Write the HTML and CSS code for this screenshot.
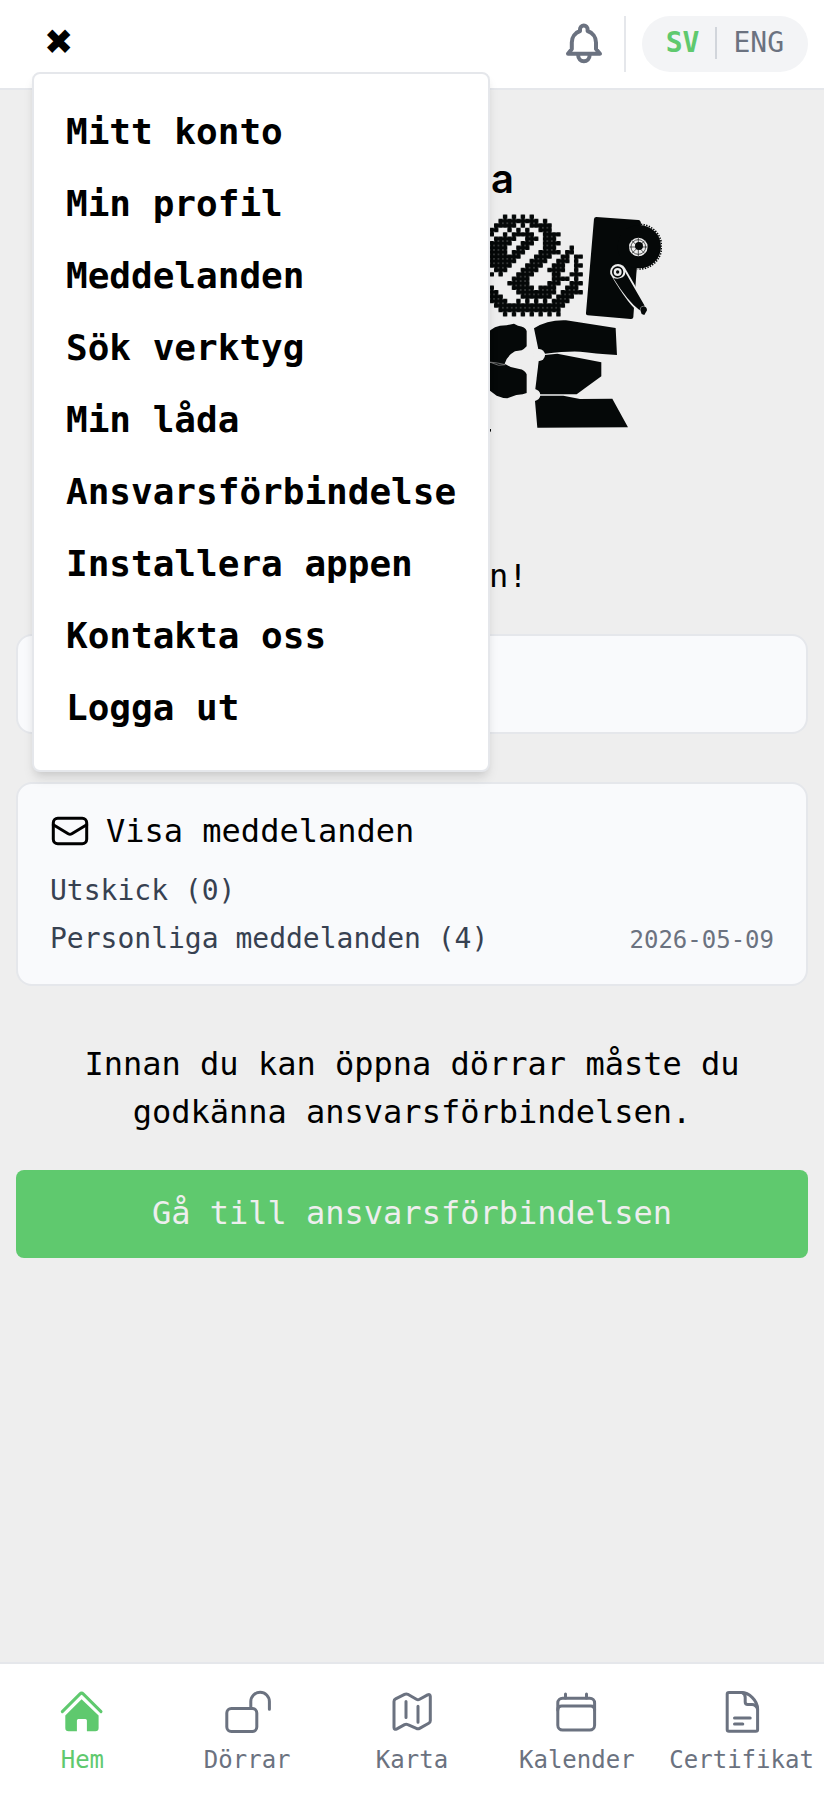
FILE: index.html
```html
<!DOCTYPE html>
<html lang="sv">
<head>
    <meta charset="UTF-8">
    <meta name="viewport" content="width=device-width, initial-scale=1.0">
    <title>Hem</title>
    <link rel="stylesheet" href="styles.css">
</head>
<body>
    <header class="header">
        <button class="menu-toggle" id="menuToggle" type="button" aria-label="Stäng menyn" aria-expanded="true">✖</button>

        <div class="header-actions">
            <button class="bell" type="button" aria-label="Notiser">
                <svg viewBox="0 0 48 48">
                    <path d="M8 33.7L11.8 29V22.5A12.2 12.2 0 0 1 20 11V9.3a3.8 3.8 0 0 1 7.6 0V11a12.2 12.2 0 0 1 8.4 11.5V29L40 33.7z"/>
                    <path d="M18.2 35.5a5.7 5.7 0 0 0 11.4 0"/>
                </svg>
            </button>
            <div class="language">
                <button class="lang active" type="button">SV</button>
                <span class="lang-divider"></span>
                <button class="lang" type="button">ENG</button>
            </div>
        </div>

        <nav class="menu" id="menu">
            <a href="#">Mitt konto</a>
            <a href="#">Min profil</a>
            <a href="#">Meddelanden</a>
            <a href="#">Sök verktyg</a>
            <a href="#">Min låda</a>
            <a href="#">Ansvarsförbindelse</a>
            <a href="#">Installera appen</a>
            <a href="#">Kontakta oss</a>
            <a href="#">Logga ut</a>
        </nav>
    </header>

    <main class="content">
        <svg class="logo" viewBox="162 160 500 280" aria-hidden="true">
            <defs>
                <pattern id="stitch" width="1" height="1" patternUnits="userSpaceOnUse">
                    <path d="M0 .5H1M.5 0V1" stroke="#050808" stroke-width=".84"/>
                </pattern>
            </defs>
            <text class="logo-text" x="514" y="193" text-anchor="end">a</text>

            <!-- O, cross-stitch -->
            <g transform="translate(485.1 214.4) scale(4.444)">
                <path fill="url(#stitch)" d="M4 0h1v1h-1zM6 0h1v1h-1zM8 0h1v1h-1zM10 0h1v1h-1z
                    M3 1h9v1h-9zM13 1h1v1h-1z
                    M2 2h4v1h-4zM6 2h1v1h-1zM8 2h1v1h-1zM10 2h5v1h-5z
                    M1 3h2v1h-2zM5 3h1v1h-1zM7 3h1v1h-1zM9 3h1v1h-1zM12 3h3v1h-3z
                    M1 4h1v1h-1zM4 4h1v1h-1zM6 4h5v1h-5zM13 4h4v1h-4z
                    M2 5h5v1h-5zM9 5h3v1h-3zM13 5h3v1h-3z
                    M1 6h5v1h-5zM8 6h3v1h-3zM13 6h4v1h-4z
                    M1 7h4v1h-4zM7 7h3v1h-3zM13 7h3v1h-3zM19 7h1v1h-1z
                    M1 8h4v1h-4zM6 8h3v1h-3zM12 8h5v1h-5zM18 8h2v1h-2z
                    M1 9h7v1h-7zM11 9h4v1h-4zM17 9h2v1h-2zM20 9h2v1h-2z
                    M1 10h6v1h-6zM10 10h4v1h-4zM16 10h3v1h-3zM20 10h1v1h-1z
                    M1 11h5v1h-5zM9 11h4v1h-4zM15 11h3v1h-3zM20 11h2v1h-2z
                    M2 12h3v1h-3zM8 12h4v1h-4zM14 12h4v1h-4zM20 12h1v1h-1z
                    M1 13h1v1h-1zM3 13h1v1h-1zM7 13h4v1h-4zM15 13h2v1h-2zM19 13h3v1h-3z
                    M6 14h4v1h-4zM15 14h4v1h-4zM20 14h1v1h-1z
                    M5 15h5v1h-5zM14 15h3v1h-3zM19 15h3v1h-3z
                    M1 16h1v1h-1zM6 16h5v1h-5zM12 16h4v1h-4zM18 16h3v1h-3z
                    M1 17h2v1h-2zM7 17h9v1h-9zM17 17h5v1h-5z
                    M1 18h3v1h-3zM8 18h7v1h-7zM16 18h4v1h-4z
                    M1 19h4v1h-4zM7 19h1v1h-1zM9 19h1v1h-1zM11 19h1v1h-1zM13 19h1v1h-1zM15 19h4v1h-4z
                    M2 20h16v1h-16z
                    M3 21h14v1h-14z
                    M4 22h1v1h-1zM6 22h1v1h-1zM8 22h1v1h-1zM10 22h1v1h-1zM12 22h1v1h-1zM14 22h1v1h-1zM16 22h1v1h-1z"/>
            </g>

            <!-- R, chainring and crank -->
            <g transform="translate(470 150) scale(.3333)">
                <path class="ink" d="M379 201l126 9q8 1 8 12l-14 150-9 130q-1 6-8 5l-129-11q-6-1-5-7l24-282q1-6 7-6z"/>
                <circle class="ink" cx="508" cy="290" r="65"/>
                <path fill="none" stroke="#050808" stroke-width="5" stroke-dasharray="4 4" d="M513 223a67 67 0 0 1-10 134"/>
                <circle class="paper" cx="505" cy="291" r="28"/>
                <g fill="none" stroke="#050808" stroke-width="2">
                    <circle cx="505" cy="291" r="22"/>
                    <path d="M505 264v54M478 291h54M486 272l38 38M524 272l-38 38"/>
                </g>
                <circle class="ink" cx="507" cy="288" r="12"/>
                <path class="paper" d="M421 372a24 24 0 0 1 44-18l66 115a15 15 0 0 1-20 20q-30-15-90-117z"/>
                <path class="ink" d="M430 384q14 5 28-2 10-8 7-17l59 102q-14 0-15 14-36-27-79-97z"/>
                <circle class="ink" cx="443" cy="366" r="17"/>
                <circle class="paper" cx="443" cy="366" r="12"/>
                <circle class="ink" cx="443" cy="366" r="5"/>
                <path class="ink" d="M511 480a10 10 0 1 1 17 6l-5 9-8-3z"/>
            </g>

            <!-- C and E, lower row -->
            <g transform="translate(470 300) scale(.3333)">
                <path class="ink" d="M40 110L62 90q12-10 28-13l20-1 22-5 12 6q22 3 26 16v46q-7 8-15 12l-20 3q-25 14-31 37l18 10 26 6q16 2 22 16v56l-12 4-19 2-27 10-12-1-20-7-20-15-20-30z"/>
                <path d="M40 184l24 4 22 8 20-2-24-5z" fill="none" stroke="#9a9a9a" stroke-width="2"/>
                <path class="ink" d="M192 85q40-26 96-24l149 23 4 81q-70-5-110-10-40-2-106 6l-20-13z"/>
                <path class="ink" d="M206 184l19-19 37-4 132 26v42l-74 54H210l-14-15z"/>
                <path class="ink" d="M195 303l15-16h70l50 10 97-1 47 86-272 1z"/>
                <circle class="paper" cx="207" cy="165" r="18"/>
                <circle class="paper" cx="194" cy="285" r="17"/>
                <path class="ink" d="M58 387h5v6l-5 6z"/>
            </g>
        </svg>

        <p class="greeting">Hej, vännen!</p>

        <section class="card card-empty"></section>

        <section class="card">
            <h2 class="card-title">
                <svg viewBox="0 0 40 40">
                    <rect x="3.3" y="7.3" width="33.4" height="25.4" rx="4.5"/>
                    <path d="M3.3 13.8l14.9 9q1.8 1 3.6 0l14.9-9"/>
                </svg>
                Visa meddelanden
            </h2>
            <div class="card-row">
                <span>Utskick (0)</span>
            </div>
            <div class="card-row">
                <span>Personliga meddelanden (4)</span>
                <time datetime="2026-05-09">2026-05-09</time>
            </div>
        </section>

        <p class="notice">Innan du kan öppna dörrar måste du godkänna ansvarsförbindelsen.</p>
        <button class="primary" type="button">Gå till ansvarsförbindelsen</button>
    </main>

    <nav class="tabbar">
        <a class="tab active" href="#">
            <svg viewBox="0 0 48 48">
                <path d="M4.3 23.6L21.8 6.1q1.8-1.8 3.6 0L43 23.6"/>
                <path class="solid" d="M7.3 27.5L23.6 11.3 40.6 27.5V40q0 3.3-3.3 3.3H28.9V32.5q0-1.5-1.5-1.5H20.4q-1.5 0-1.5 1.5V43.3H10.6q-3.3 0-3.3-3.3z"/>
            </svg>
            <span>Hem</span>
        </a>
        <a class="tab" href="#">
            <svg viewBox="0 0 48 48">
                <rect x="3.8" y="20.4" width="30" height="23" rx="4.5"/>
                <path d="M27.8 20.4V13.6a9.3 9.3 0 0 1 18.6 0V21.2"/>
            </svg>
            <span>Dörrar</span>
        </a>
        <a class="tab" href="#">
            <svg viewBox="0 0 48 48">
                <path d="M6 13.5q0-1.8 1.6-2.6L16.6 6.3q1.6-.8 3.2 0L28.4 11.2q1.6.9 3.2 0L39.6 6.9q2.7-1.2 2.7 1.6V32.7q0 1.6-1.6 2.5L31.6 40.4q-1.6.9-3.2 0L19.8 36.6q-1.6-.8-3.2 0L8.9 40.9Q6 42.3 6 39.5z"/>
                <path d="M18 13.5V29.5M30 18.2V34.2"/>
            </svg>
            <span>Karta</span>
        </a>
        <a class="tab" href="#">
            <svg viewBox="0 0 48 48">
                <rect x="4.8" y="10.2" width="36.8" height="31.8" rx="4.8"/>
                <path d="M12.5 6V10M33.5 6V10M4.8 22q0-4 4-4H37.6q4 0 4 4"/>
            </svg>
            <span>Kalender</span>
        </a>
        <a class="tab" href="#">
            <svg viewBox="0 0 48 48">
                <path d="M11 4.5H23.5C31 4.5 39.6 12.5 39.6 21V41.5q0 1.8-1.8 1.8H11q-1.8 0-1.8-1.8V6.3q0-1.8 1.8-1.8z"/>
                <path d="M24 4.5q3.2 1 3.2 5V14q0 2.5 2.5 2.5H34q4 0 5.6 4.5M16.5 30H32.2M16.5 36H24.8"/>
            </svg>
            <span>Certifikat</span>
        </a>
    </nav>

    <script>
        const menu = document.getElementById('menu');
        const menuToggle = document.getElementById('menuToggle');

        menuToggle.addEventListener('click', function() {
            menu.hidden = !menu.hidden;
            menuToggle.textContent = menu.hidden ? '☰' : '✖';
            menuToggle.setAttribute('aria-expanded', String(!menu.hidden));
        });
    </script>
</body>
</html>
```

FILE: styles.css
```css
* {
    box-sizing: border-box;
}
body {
    display: flex;
    flex-direction: column;
    min-height: 100vh;
    margin: 0;
    background-color: #eee;
    color: #000;
    font-family: "DejaVu Sans Mono", monospace;
    font-size: 32px;
    line-height: 48px;
}
button {
    padding: 0;
    border: none;
    background: none;
    color: inherit;
    font: inherit;
    cursor: pointer;
}
a {
    color: inherit;
    text-decoration: none;
}
svg {
    display: block;
}
p {
    margin: 0;
    text-align: center;
}

/* Header */
.header {
    position: relative;
    display: flex;
    align-items: center;
    justify-content: space-between;
    padding: 16px 16px 16px 44px;
    border-bottom: 2px solid #e5e7eb;
    background-color: #fff;
}
.menu-toggle {
    padding-bottom: 4px;
    font-family: "DejaVu Sans", sans-serif;
    font-size: 35px;
    line-height: 48px;
}
.header-actions {
    display: flex;
}
.bell {
    display: flex;
    align-items: center;
    padding-right: 16px;
    border-right: 2px solid #e5e7eb;
}
.bell svg {
    width: 48px;
    height: 48px;
    fill: none;
    stroke: #6b7280;
    stroke-width: 4;
    stroke-linecap: round;
    stroke-linejoin: round;
}
.language {
    display: flex;
    align-items: center;
    gap: 16px;
    height: 56px;
    margin-left: 16px;
    padding: 0 24px 2px;
    border-radius: 28px;
    background-color: #f3f4f6;
}
.lang {
    color: #6b7280;
    font-size: 28px;
    line-height: 40px;
}
.lang.active {
    color: #5fc96e;
    font-weight: bold;
}
.lang-divider {
    width: 2px;
    height: 32px;
    background-color: #d1d5db;
}

/* Dropdown menu */
.menu {
    position: absolute;
    top: 72px;
    left: 32px;
    z-index: 10;
    padding: 22px 32px 26px;
    border: 2px solid #e5e7eb;
    border-radius: 8px;
    background-color: #fff;
    box-shadow: 0 8px 12px -2px rgba(0, 0, 0, 0.1), 0 4px 8px -4px rgba(0, 0, 0, 0.1);
}
.menu[hidden] {
    display: none;
}
.menu a {
    display: block;
    font-size: 36px;
    font-weight: bold;
    line-height: 72px;
}

/* Page */
.content {
    flex: 1;
    display: flex;
    flex-direction: column;
    padding: 70px 16px 32px;
}
.logo {
    align-self: center;
    width: 500px;
    max-width: 100%;
}
.logo-text {
    font-family: Inter, sans-serif;
    font-size: 40px;
    font-weight: 600;
}
.ink {
    fill: #050808;
}
.paper {
    fill: #eee;
}
.greeting {
    margin: 112px 0 34px;
}
.card {
    margin-bottom: 48px;
    padding: 23px 32px 24px;
    border: 2px solid #e5e7eb;
    border-radius: 16px;
    background-color: #f9fafc;
}
.card-empty {
    min-height: 100px;
}
.card-title {
    display: flex;
    align-items: center;
    gap: 16px;
    margin: 0 0 16px;
    font-size: 32px;
    font-weight: normal;
    line-height: 48px;
}
.card-title svg {
    width: 40px;
    height: 40px;
    fill: none;
    stroke: #000;
    stroke-width: 3;
    stroke-linecap: round;
    stroke-linejoin: round;
}
.card-row {
    display: flex;
    align-items: baseline;
    justify-content: space-between;
    color: #374151;
    font-size: 28px;
    line-height: 40px;
}
.card-row + .card-row {
    margin-top: 8px;
}
.card-row time {
    color: #6b7280;
    font-size: 24px;
}
.notice {
    margin: 6px 32px 34px;
}
.primary {
    height: 88px;
    padding-bottom: 2px;
    border-radius: 8px;
    background-color: #5fc96e;
    color: #eee;
}

/* Bottom navigation */
.tabbar {
    display: grid;
    grid-template-columns: repeat(5, 1fr);
    border-top: 2px solid #e5e7eb;
    background-color: #fff;
}
.tab {
    display: flex;
    flex-direction: column;
    align-items: center;
    gap: 8px;
    padding: 24px 0;
    color: #6b7280;
    font-size: 24px;
    line-height: 32px;
}
.tab.active {
    color: #5fc96e;
}
.tab svg {
    width: 48px;
    height: 48px;
    fill: none;
    stroke: currentColor;
    stroke-width: 3;
    stroke-linecap: round;
    stroke-linejoin: round;
}
.tab svg .solid {
    fill: currentColor;
    stroke: none;
}
```
